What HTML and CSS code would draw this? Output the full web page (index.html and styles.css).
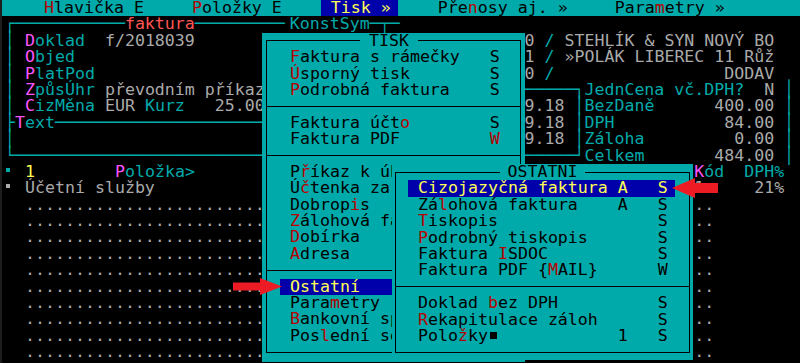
FILE: index.html
```html
<!DOCTYPE html>
<html lang="cs">
<head>
    <meta charset="UTF-8">
    <meta name="viewport" content="width=device-width, initial-scale=1.0">
    <title>Faktura - Tisk</title>
    <link rel="stylesheet" href="styles.css">
</head>
<body>
    <div class="screen">
        <div class="menubar">
            <span class="mi"><span class="hk">H</span>lavička E</span>
            <span class="mi"><span class="hk">P</span>oložky E</span>
            <span class="mi sel">Tisk »</span>
            <span class="mi">Pře<span class="hk">n</span>osy aj. »</span>
            <span class="mi">Para<span class="hk">m</span>etry »</span>
        </div>

        <!-- podklad: hlavicka faktury a polozky -->
        <div class="desk">
            <div class="row"><span class="cl">┌───────────<span class="rd">faktura</span>────────<span class="hs">─</span>KonstSym─┬─</span><span class="cr"></span></div>
            <div class="row"><span class="cl">│ <span class="m">D</span>oklad  <span class="g">f/2018039</span></span><span class="cr"> <span class="g">0</span> / <span class="g">STEHLÍK &amp; SYN NOVÝ BO</span></span></div>
            <div class="row"><span class="cl">│ <span class="m">O</span>bjed</span><span class="cr"> <span class="g">1</span> / <span class="g">»POLÁK LIBEREC 11 Růž</span></span></div>
            <div class="row"><span class="cl">│ <span class="m">P</span>latPod</span><span class="cr"> <span class="g">0</span> /                 <span class="g">DODAV</span></span></div>
            <div class="row"><span class="cl">│ <span class="m">Z</span>půsÚhr <span class="g">převodním příkazem</span></span><span class="cr">──────┐JednCena vč.DPH?  <span class="g">N</span> │</span></div>
            <div class="row"><span class="cl">│ <span class="m">C</span>izMěna <span class="g">EUR</span> Kurz   <span class="g">25.000</span></span><span class="cr"> <span class="g">9.18</span> │BezDaně      <span class="g">400.00</span> │</span></div>
            <div class="row"><span class="cl">├<span class="m">T</span>ext──────────────────────────</span><span class="cr"> <span class="g">9.18</span> │DPH           <span class="g">84.00</span> │</span></div>
            <div class="row"><span class="cl">│</span><span class="cr"> <span class="g">9.18</span> │Záloha         <span class="g">0.00</span> │</span></div>
            <div class="row"><span class="cl">└──────────────────────────────</span><span class="cr">──────┘Celkem       <span class="g">484.00</span> │</span></div>
            <div class="row"><span class="cl"><i class="sq"></i> <span class="y">1</span>        <span class="m">P</span>oložka&gt;</span><span class="cr">                  <span class="m">K</span>ód  DPH%</span></div>
            <div class="row"><span class="cl g"><i class="sq"></i> Účetní služby</span><span class="cr">                  <span class="g">1</span>     <span class="g">21%</span></span></div>
            <div class="row"><span class="cl g">  .............................</span><span class="cr g">                  ..</span></div>
            <div class="row"><span class="cl g">  .............................</span><span class="cr g">                  ..</span></div>
            <div class="row"><span class="cl g">  .............................</span><span class="cr g">                  ..</span></div>
            <div class="row"><span class="cl g">  .............................</span><span class="cr g">                  ..</span></div>
            <div class="row"><span class="cl g">  .............................</span><span class="cr g">                  ..</span></div>
            <div class="row"><span class="cl g">  .............................</span><span class="cr g">                  ..</span></div>
            <div class="row"><span class="cl g">  .............................</span><span class="cr g">                  ..</span></div>
            <div class="row"><span class="cl g">  .............................</span><span class="cr g">                  ..</span></div>
            <div class="row"><span class="cl g">  .............................</span><span class="cr g">                  ..</span></div>
            <div class="row"><span class="cl g">  .............................</span><span class="cr g">                  ..</span></div>
        </div>

        <!-- menu TISK -->
        <div class="popup tisk">
            <div class="frame">
                <div class="title"><span>TISK</span></div>
                <div class="item"><span class="hk">F</span>aktura s rámečky   S</div>
                <div class="item"><span class="hk">Ú</span>sporný tisk        S</div>
                <div class="item"><span class="hk">P</span>odrobná faktura    S</div>
                <div class="sep"></div>
                <div class="item">Faktura účt<span class="hk">o</span>        S</div>
                <div class="item">Faktura PDF         <span class="hk">W</span></div>
                <div class="sep"></div>
                <div class="item">P<span class="hk">ř</span>íkaz k úhradě     S</div>
                <div class="item">Ú<span class="hk">č</span>tenka za hotové   S</div>
                <div class="item">Dobrop<span class="hk">i</span>s            S</div>
                <div class="item"><span class="hk">Z</span>álohová faktura    S</div>
                <div class="item"><span class="hk">D</span>obírka             S</div>
                <div class="item"><span class="hk">A</span>dresa              S</div>
                <div class="sep"></div>
                <div class="item sel">Ostatní</div>
                <div class="item">Para<span class="hk">m</span>etry</div>
                <div class="item"><span class="hk">B</span>ankovní spojení</div>
                <div class="item">Pos<span class="hk">l</span>ední sestava</div>
            </div>
        </div>

        <!-- podmenu OSTATNI -->
        <div class="popup ostatni">
            <div class="frame">
                <div class="title"><span>OSTATNÍ</span></div>
                <div class="item sel">Cizojazyčná faktura A   S</div>
                <div class="item">Zá<span class="hk">l</span>ohová faktura    A   S</div>
                <div class="item"><span class="hk">T</span>iskopis                S</div>
                <div class="item"><span class="hk">P</span>odrobný tiskopis       S</div>
                <div class="item">Faktura <span class="hk">I</span>SDOC           S</div>
                <div class="item">Faktura PDF {<span class="hk">M</span>AIL}      W</div>
                <div class="sep"></div>
                <div class="item">Doklad <span class="hk">b</span>ez DPH          S</div>
                <div class="item"><span class="hk">R</span>ekapitulace záloh      S</div>
                <div class="item">Polo<span class="hk">ž</span>ky<i class="blk"></i>            1   S</div>
            </div>
        </div>

        <svg class="arrow arrow-left" viewBox="0 0 52 20" width="52" height="20">
            <polygon points="1,5.5 28,5.5 28,1 50,9.5 28,18 28,13.5 1,13.5" fill="#ed1c24"/>
        </svg>
        <svg class="arrow arrow-right" viewBox="0 0 50 24" width="50" height="24">
            <polygon points="2,12 25,2 25,7 48,7 48,17 25,17 25,22" fill="#ed1c24"/>
        </svg>
    </div>
</body>
</html>
```

FILE: styles.css
```css
* {
    margin: 0;
    padding: 0;
    box-sizing: border-box;
}

body {
    background: #000;
    width: 800px;
    height: 363px;
    overflow: hidden;
    font-family: "DejaVu Sans Mono", "Liberation Mono", monospace;
    font-size: 16.6px;
    line-height: 16.4px;
}

.screen {
    position: relative;
    height: 363px;
    border-left: 2px solid #1e1e1e;
    color: #00aaaa;
}

/* horni lista */
.menubar {
    display: flex;
    height: 16.4px;
    background: #00aaaa;
    color: #000;
}

.mi {
    white-space: pre;
    height: 16.4px;
}

.mi:nth-child(1) { margin-left: 42px; }
.mi:nth-child(2) { margin-left: 48px; }
.mi:nth-child(3) { margin-left: 39px; }
.mi:nth-child(4) { margin-left: 40px; }
.mi:nth-child(5) { margin-left: 47px; }

.mi.sel {
    background: #0000aa;
    color: #ffff55;
    padding: 0 7px 0 10px;
}

/* textovy podklad */
.desk {
    padding-left: 3px;
}

.row {
    display: grid;
    grid-template-columns: 51ch auto;
    height: 16.4px;
}

.cl, .cr {
    white-space: pre;
}

.hs { letter-spacing: 5px; }

.g { color: #aaaaaa; }
.m { color: #ff55ff; }
.y { color: #ffff55; }
.rd { color: #ff5555; }
.hk { color: #b80000; }

.sq {
    display: inline-block;
    width: 4px;
    height: 4px;
    margin: 0 5px 0 1px;
    background: currentColor;
    vertical-align: 5px;
}

/* vyskakovaci menu */
.popup {
    position: absolute;
    background: #00aaaa;
    color: #000;
}

.tisk {
    left: 260px;
    top: 32.8px;
    width: 263px;
    padding: 7.7px 4px 9px;
}

.ostatni {
    left: 390px;
    top: 164px;
    width: 301px;
    padding: 7.7px 3px 6.9px;
}

.frame {
    border: 1px solid #000;
    padding-bottom: 7.7px;
}

.title {
    height: 16.4px;
    margin-top: -8.7px;
    white-space: pre;
}

.title span {
    display: inline-block;
    height: 16.4px;
    padding: 0 9px;
    background: #00aaaa;
}

.tisk .title { padding-left: 93px; }
.ostatni .title { text-align: center; }
.ostatni .title span { padding: 0 8px; }

.item {
    height: 16.4px;
    margin: 0 13px;
    padding-left: 10px;
    white-space: pre;
}

.ostatni .item {
    margin: 0 14px 0 12px;
}

.item.sel {
    background: #0000aa;
    color: #ffff55;
}

.sep {
    height: 16.4px;
    background: linear-gradient(#000, #000) 0 7.7px / 100% 1px no-repeat;
}

.blk {
    display: inline-block;
    width: 7px;
    height: 7px;
    margin: 0 1px 0 2px;
    background: #000;
    vertical-align: 2px;
}

/* cervene sipky */
.arrow {
    position: absolute;
}

.arrow-left {
    left: 230px;
    top: 277px;
}

.arrow-right {
    left: 668px;
    top: 176px;
}
```
